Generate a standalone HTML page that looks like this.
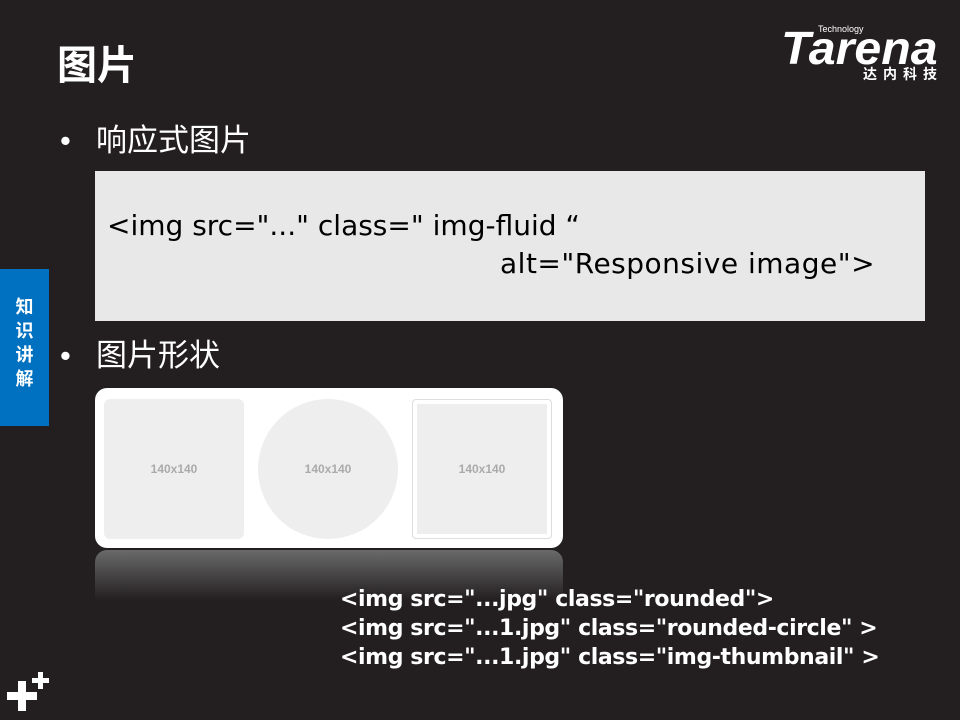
<!DOCTYPE html>
<html><head><meta charset="utf-8"><style>
body{margin:0;width:960px;height:720px;background:#231f20;position:relative;overflow:hidden;font-family:"Liberation Sans","Noto Sans CJK SC",sans-serif;color:#fff}
.a{position:absolute}
</style></head><body>
<div class="a" style="left:57px;top:39px;font-size:40px;font-weight:bold;line-height:54px">图片</div>
<div class="a" style="left:818px;top:24px;font-size:9px;line-height:10px">Technology</div>
<div class="a" style="left:781px;top:23px;font-size:46px;font-weight:bold;font-style:italic;letter-spacing:0px;line-height:50px;transform:scaleX(1.05);transform-origin:left">Tarena</div>
<div class="a" style="left:863px;top:65px;font-size:14px;line-height:18px;font-weight:bold;letter-spacing:6px;white-space:nowrap">达内科技</div>
<div class="a" style="left:60px;top:122px;font-size:31px;line-height:38px">•</div>
<div class="a" style="left:96px;top:122px;font-size:31px;line-height:38px">响应式图片</div>
<div class="a" style="left:95px;top:171px;width:830px;height:150px;background:#e8e8e8;color:#000;font-family:'DejaVu Sans',sans-serif">
<div class="a" style="left:12px;top:38px;white-space:nowrap;font-size:28px">&lt;img src="..." class=" img-fluid “</div>
<div class="a" style="left:405px;top:76px;white-space:nowrap;font-size:28px;letter-spacing:0.5px">alt="Responsive image"&gt;</div>
</div>
<div class="a" style="left:60px;top:337px;font-size:31px;line-height:38px">•</div>
<div class="a" style="left:96px;top:337px;font-size:31px;line-height:38px">图片形状</div>
<div class="a" style="left:95px;top:388px;width:468px;height:160px;background:#fff;border-radius:12px"></div>
<div class="a" style="left:95px;top:550px;width:468px;height:50px;background:linear-gradient(#6a6a6a,#231f20);border-radius:12px 12px 0 0"></div>
<div class="a" style="left:104px;top:399px;width:140px;height:140px;background:#eee;border-radius:6px;color:#aaa;font-size:12px;font-weight:bold;text-align:center;line-height:140px">140x140</div>
<div class="a" style="left:258px;top:399px;width:140px;height:140px;background:#eee;border-radius:50%;color:#aaa;font-size:12px;font-weight:bold;text-align:center;line-height:140px">140x140</div>
<div class="a" style="left:412px;top:399px;width:138px;height:138px;border:1px solid #ddd;border-radius:4px;background:#fff"></div>
<div class="a" style="left:417px;top:404px;width:130px;height:130px;background:#eee;color:#aaa;font-size:12px;font-weight:bold;text-align:center;line-height:130px">140x140</div>
<div class="a" style="left:340px;top:585px;font-size:22px;font-weight:bold;line-height:29px;font-family:'DejaVu Sans',sans-serif;letter-spacing:-0.4px;white-space:nowrap">&lt;img src="...jpg" class="rounded"&gt;<br>&lt;img src="...1.jpg" class="rounded-circle" &gt;<br>&lt;img src="...1.jpg" class="img-thumbnail" &gt;</div>
<div class="a" style="left:0;top:269px;width:49px;height:157px;background:#0070c0;font-size:18px;font-weight:bold;text-align:center;line-height:24px;padding-top:26px;box-sizing:border-box">知<br>识<br>讲<br>解</div>
<div class="a" style="left:7px;top:692px;width:30px;height:8px;background:#fff"></div>
<div class="a" style="left:18px;top:681px;width:8px;height:30px;background:#fff"></div>
<div class="a" style="left:32px;top:678px;width:17px;height:5px;background:#fff"></div>
<div class="a" style="left:38px;top:672px;width:5px;height:17px;background:#fff"></div>
</body></html>
